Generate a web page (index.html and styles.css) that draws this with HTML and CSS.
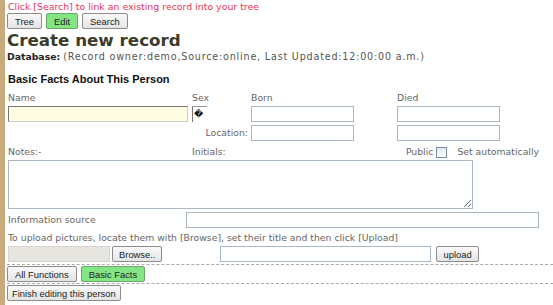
FILE: index.html
```html
<!DOCTYPE html>
<html lang="en">
<head>
  <meta charset="UTF-8">
  <title>Create new record</title>
  <link rel="stylesheet" href="styles.css">
</head>
<body>
  <p class="notice">Click [Search] to link an existing record into your tree</p>
  <div class="toolbar">
    <button class="btn">Tree</button>
    <button class="btn btn-on">Edit</button>
    <button class="btn">Search</button>
  </div>

  <h1>Create new record</h1>
  <p class="dbline"><b>Database:</b> <span class="dbinfo">(Record owner:demo,Source:online, Last Updated:12:00:00 a.m.)</span></p>

  <h2>Basic Facts About This Person</h2>

  <div class="facts">
    <span class="lbl">Name</span>
    <span class="lbl">Sex</span>
    <span class="lbl">Born</span>
    <span class="lbl">Died</span>

    <input type="text" class="name-input">
    <span class="sex-box">&#xFFFD;</span>
    <input type="text" class="date-input">
    <input type="text" class="date-input">

    <span></span>
    <span class="lbl loc">Location:</span>
    <input type="text" class="date-input">
    <input type="text" class="date-input">
  </div>

  <div class="notes-head">
    <span class="lbl notes-lbl">Notes:-</span>
    <span class="lbl">Initials:</span>
    <span class="lbl public">Public <span class="check"></span></span>
    <span class="lbl auto">Set automatically</span>
  </div>
  <textarea class="notes"></textarea>

  <div class="source-row">
    <span class="lbl">Information source</span>
    <input type="text" class="source-input">
  </div>

  <p class="lbl upload-help">To upload pictures, locate them with [Browse], set their title and then click [Upload]</p>
  <div class="upload-row">
    <span class="file-box"></span>
    <button class="btn browse">Browse..</button>
    <input type="text" class="title-input">
    <button class="btn upload">upload</button>
  </div>

  <div class="func-bar">
    <button class="btn">All Functions</button>
    <button class="btn btn-on">Basic Facts</button>
  </div>
  <div class="finish-row">
    <button class="btn finish">Finish editing this person</button>
  </div>
</body>
</html>
```

FILE: styles.css
```css
body {
  margin: 0;
  min-height: 305px;
  box-sizing: border-box;
  border-left: 5px solid #c9aa7b;
  padding: 1px 0 0 2px;
  font-family: "DejaVu Sans", Verdana, sans-serif;
  font-size: 9.3px;
  color: #555;
  background: #fff;
}
p {
  margin: 0;
}
.notice {
  color: #ea3458;
  font-size: 9.4px;
  line-height: 11px;
  padding-left: 1px;
}
.btn {
  font-family: "Liberation Sans", Arial, sans-serif;
  font-size: 9.4px;
  color: #222;
  height: 16px;
  padding: 0 7px;
  border: 1px solid #8c8c8c;
  border-radius: 2px;
  background: linear-gradient(#fafafa, #e4e4e4);
  margin: 0;
}
.btn-on {
  background: #84e584;
  border-color: #6aa86a;
}
.toolbar {
  display: flex;
  gap: 4px;
  margin-top: 1px;
}
h1 {
  margin: 1px 0 0;
  font-size: 16.7px;
  line-height: 21px;
  color: #3b3b2c;
}
.dbline {
  margin-top: 1px;
  font-size: 9.3px;
  line-height: 10px;
  color: #555;
}
.dbline b {
  color: #222;
}
.dbinfo {
  font-size: 9.6px;
  letter-spacing: 0.8px;
}
h2 {
  margin: 11px 0 0 1px;
  font-family: "Liberation Sans", Arial, sans-serif;
  font-size: 11px;
  line-height: 12px;
  color: #111;
}
.lbl {
  color: #666;
  line-height: 10px;
}
input, textarea {
  box-sizing: border-box;
  margin: 0;
  border: 1px solid #a9b7c6;
  background: #fff;
  font-size: 8px;
}
.facts {
  display: grid;
  grid-template-columns: 184px 59px 146px 110px;
  grid-template-rows: 12px 16px 18px;
  row-gap: 2px;
  margin: 7px 0 0 1px;
  align-items: center;
}
.name-input {
  width: 180px;
  height: 16px;
  background: #fffde1;
  border-color: #777 #ccc #ccc #777;
}
.sex-box {
  box-sizing: border-box;
  width: 15px;
  height: 16px;
  border-left: 1px solid #777;
  border-top: 1px solid #999;
  color: #111;
  font-size: 9px;
  line-height: 14px;
  padding-left: 1px;
}
.date-input {
  width: 103px;
  height: 16px;
}
.loc {
  text-align: right;
  padding-right: 3px;
}
.notes-head {
  display: flex;
  align-items: center;
  margin: 4px 0 0 1px;
  height: 12px;
}
.notes-lbl {
  width: 184px;
}
.public {
  margin-left: auto;
  display: flex;
  align-items: center;
  gap: 3px;
  margin-right: 10px;
}
.check {
  width: 9px;
  height: 9px;
  border: 1px solid #7b8ea3;
  background: linear-gradient(#e4e8ee, #fff);
}
.auto {
  margin-right: 14px;
}
.notes {
  display: block;
  width: 465px;
  height: 49px;
  margin: 2px 0 0 1px;
  resize: both;
}
.source-row {
  display: flex;
  align-items: center;
  justify-content: space-between;
  margin: 3px 0 0 1px;
  width: 531px;
}
.source-input {
  width: 353px;
  height: 16px;
}
.upload-help {
  margin: 4px 0 0 1px;
  line-height: 11px;
}
.upload-row {
  display: flex;
  align-items: center;
  margin: 3px 0 0 1px;
  height: 16px;
}
.file-box {
  width: 102px;
  height: 16px;
  box-sizing: border-box;
  background: #e6e5e0;
  border: 1px solid #d6d4cc;
}
.browse {
  margin-left: 2px;
  padding: 0 6px;
}
.title-input {
  width: 211px;
  height: 16px;
  margin-left: 58px;
  margin-right: 5px;
}
.upload {
  padding: 0 6px;
}
.func-bar {
  display: flex;
  gap: 4px;
  margin-top: 2px;
  padding: 1px 0 1px;
  border-top: 1px dashed #aaa;
  border-bottom: 1px dashed #aaa;
}
.finish-row {
  margin-top: 1px;
}
.finish {
  padding: 0 4px;
}
```
